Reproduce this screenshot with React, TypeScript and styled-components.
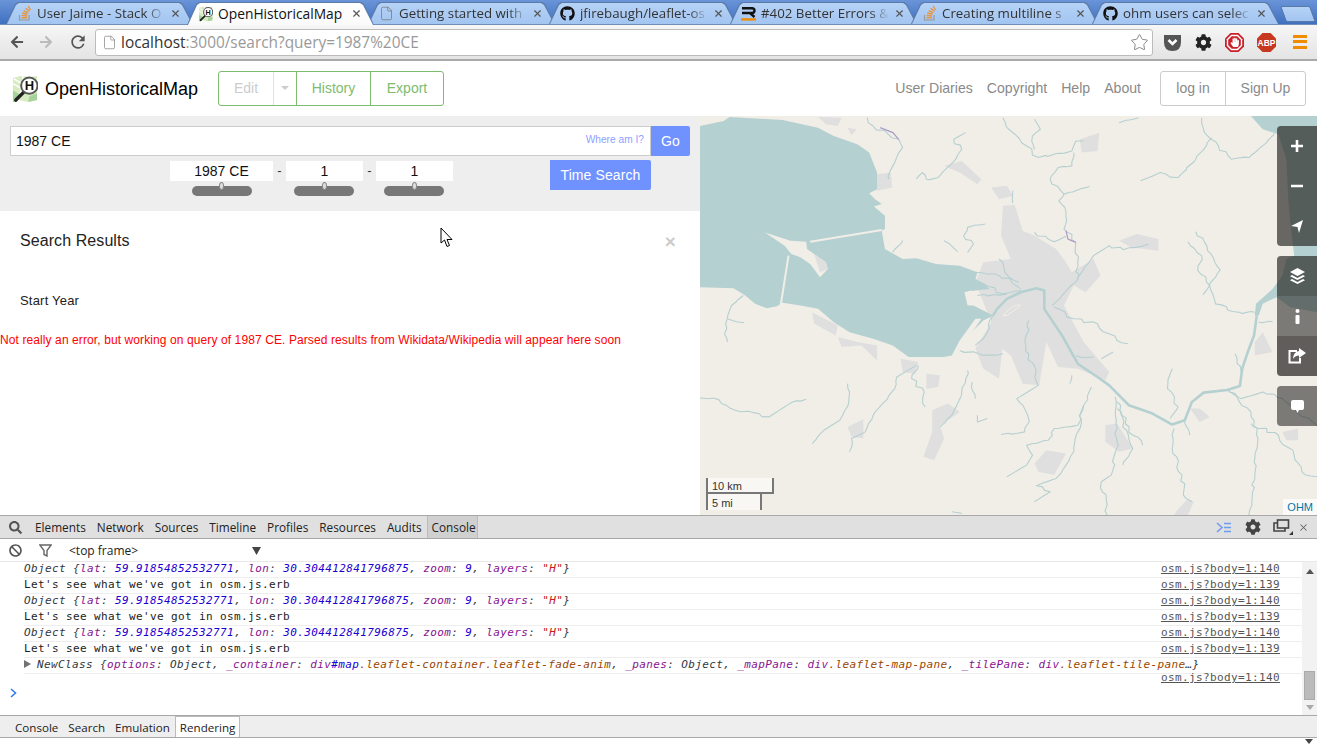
import styled, { createGlobalStyle } from 'styled-components';
import { FaGithub, FaCog, FaArrowLeft, FaArrowRight, FaHandPaper, FaBan, FaSearch } from 'react-icons/fa';
import { MdRefresh } from 'react-icons/md';
import { File, Star, X } from 'lucide-react';

const GlobalStyle = createGlobalStyle`
  html, body { margin: 0; padding: 0; background: #fff; }
  * { box-sizing: border-box; }
`;

const Page = styled.div`
  width: 1317px;
  height: 744px;
  display: flex;
  flex-direction: column;
  position: relative;
  overflow: hidden;
  font-family: "Liberation Sans", Arial, sans-serif;
`;

/* browser chrome */
const TabStrip = styled.div`
  height: 25px;
  display: flex;
  padding-left: 6px;
  background: linear-gradient(#6a94d8, #3f70c0);
  border-bottom: 1px solid #6f8fb8;
`;

const tabShape = 'polygon(0 100%, 9px 2px, 12px 0, calc(100% - 13px) 0, calc(100% - 10px) 2px, 100% 100%)';

const TabEdge = styled.div<{ $active?: boolean }>`
  width: 187px;
  height: ${p => (p.$active ? 23 : 22)}px;
  margin: 2px -6px 0 0;
  padding: 1px 1px 0;
  flex: none;
  position: relative;
  z-index: ${p => (p.$active ? 2 : 1)};
  background: #5a7ba8;
  clip-path: ${tabShape};
`;

const TabFace = styled.div<{ $active?: boolean }>`
  height: 100%;
  display: flex;
  align-items: center;
  padding: 0 11px 1px 10px;
  gap: 5px;
  background: ${p => (p.$active ? 'linear-gradient(#fff, #fafafa)' : 'linear-gradient(#b6d2f6, #a2c5f1)')};
  clip-path: ${tabShape};
`;

const TabIcon = styled.span`
  width: 15px;
  height: 16px;
  flex: none;
  display: flex;
  align-items: center;
  justify-content: center;
`;

const TabTitle = styled.span<{ $active?: boolean }>`
  flex: 1;
  overflow: hidden;
  white-space: nowrap;
  font: ${p => (p.$active ? 13.8 : 13.3)}px "Open Sans", sans-serif;
  color: ${p => (p.$active ? '#111' : '#333')};
  ${p => (p.$active ? '' : 'mask-image: linear-gradient(90deg, #000 85%, transparent);')}
`;

const TabClose = styled.span`
  flex: none;
  display: flex;
  color: #555;
`;

const NewTab = styled.div`
  width: 30px;
  height: 16px;
  margin: 6px 0 0 10px;
  background: linear-gradient(#b6d2f6, #a2c5f1);
  border: 1px solid #5a7ba8;
  border-radius: 2px;
  transform: skewX(20deg);
`;

const Toolbar = styled.div`
  height: 36px;
  display: flex;
  align-items: center;
  padding: 0 8px 0 10px;
  background: linear-gradient(#f6f6f6, #e4e4e4);
  border-bottom: 2px solid #aaa;
`;

const NavIcons = styled.div`
  width: 85px;
  display: flex;
  align-items: center;
  gap: 15px;
  flex: none;
`;

const AddressBar = styled.div`
  width: 1058px;
  height: 27px;
  flex: none;
  display: flex;
  align-items: center;
  gap: 4px;
  padding: 0 3px 0 6px;
  background: #fff;
  border: 1px solid #bbb;
  border-radius: 3px;
  font: 15.4px "Open Sans", sans-serif;
  color: #999;
`;

const Host = styled.span`
  color: #333;
`;

const Url = styled.span`
  flex: 1;
  white-space: nowrap;
`;

const ExtIcons = styled.div`
  display: flex;
  align-items: center;
  gap: 13px;
  margin-left: 10px;
`;

const Burger = styled.span`
  width: 14px;
  height: 14px;
  margin-left: 4px;
  background: linear-gradient(#f08c00 0 3px, transparent 3px 5.5px, #f08c00 5.5px 8.5px, transparent 8.5px 11px, #f08c00 11px 14px);
`;

/* site header */
const Header = styled.header`
  height: 55px;
  flex: none;
  display: flex;
  align-items: center;
  padding: 0 11px;
  font-size: 14px;
`;

const Brand = styled.div`
  display: flex;
  align-items: center;
  gap: 7px;
  font-size: 18px;
  line-height: 24px;
  color: #000;
  width: 207px;
`;

const BrandName = styled.span`
  padding-top: 1px;
`;

const BtnGroup = styled.div<{ $tone: string }>`
  height: 35px;
  display: flex;
  border: 1px solid ${p => p.$tone};
  border-radius: 3px;
`;

const GroupBtn = styled.div<{ $w: number; $tone: string; $color: string; $thin?: boolean }>`
  width: ${p => p.$w}px;
  padding-bottom: 1px;
  display: flex;
  align-items: center;
  justify-content: center;
  color: ${p => p.$color};
  border-right: 1px solid ${p => (p.$thin ? '#d8e8d4' : p.$tone)};
  &:last-child { border-right: 0; }
`;

const Caret = styled.span`
  width: 0;
  height: 0;
  border: 4px solid transparent;
  border-top: 4px solid #ccc;
  border-bottom: 0;
`;

const Links = styled.nav`
  margin-left: auto;
  display: flex;
  gap: 14px;
  padding-bottom: 1px;
  font-size: 14.1px;
  color: #8a8a8a;
  margin-right: 19px;
`;

/* body */
const Main = styled.main`
  height: 399px;
  flex: none;
  display: flex;
`;

const Left = styled.section`
  width: 700px;
  flex: none;
`;

const SearchPanel = styled.div`
  height: 95px;
  background: #eee;
  padding: 10px 10px 0;
`;

const SearchRow = styled.div`
  width: 680px;
  height: 30px;
  display: flex;
`;

const QueryBox = styled.div`
  width: 641px;
  display: flex;
  align-items: center;
  justify-content: space-between;
  padding: 0 6px 0 5px;
  background: #fff;
  border: 1px solid #ccc;
  font-size: 14px;
  color: #111;
`;

const WhereAmI = styled.span`
  font-size: 10.2px;
  color: #8f9fff;
  margin-top: -3px;
`;

const BlueBtn = styled.div<{ $w: number; $h: number }>`
  width: ${p => p.$w}px;
  height: ${p => p.$h}px;
  display: flex;
  align-items: center;
  justify-content: center;
  background: #7092ff;
  color: #fff;
  font-size: 14px;
  letter-spacing: 0.1px;
  border-radius: 0 2px 2px 0;
`;

const DateRow = styled.div`
  display: flex;
  padding: 4px 0 0 160px;
`;

const DateCol = styled.div<{ $w: number }>`
  width: ${p => p.$w}px;
  display: flex;
  flex-direction: column;
  align-items: center;
  margin-top: 1px;
`;

const DateValue = styled.div`
  width: 100%;
  height: 20px;
  display: flex;
  align-items: center;
  justify-content: center;
  background: #fff;
  font-size: 14px;
  color: #111;
`;

const Slider = styled.div<{ $nudge?: boolean }>`
  width: 60px;
  height: 10px;
  margin: 5px ${p => (p.$nudge ? 1 : 0)}px 0 0;
  position: relative;
  background: #777;
  border-radius: 5px;
`;

const Thumb = styled.span`
  position: absolute;
  left: 50%;
  top: -4px;
  width: 5px;
  height: 8px;
  margin-left: -2.5px;
  background: #ddd;
  border: 1px solid #888;
  border-radius: 50%;
`;

const Dash = styled.span`
  width: 13px;
  height: 20px;
  display: flex;
  align-items: center;
  justify-content: center;
  font-size: 13px;
  color: #333;
`;

const TimeBtnWrap = styled.div`
  margin-left: 97px;
`;

const ResultsHead = styled.div`
  height: 18px;
  margin: 21px 24px 0 20px;
  display: flex;
  align-items: center;
  justify-content: space-between;
  font-size: 16px;
  letter-spacing: 0.08px;
  color: #222;
`;

const CloseMark = styled.span`
  color: #ccc;
  font-size: 19px;
  font-weight: bold;
  line-height: 1;
`;

const StartYear = styled.div`
  margin: 43px 0 0 20px;
  font-size: 13px;
  letter-spacing: 0.2px;
  line-height: 16px;
  color: #222;
`;

const Notice = styled.div`
  margin-top: 23px;
  font-size: 12px;
  letter-spacing: 0.1px;
  line-height: 16px;
  color: #f00;
  white-space: nowrap;
`;

const MapPane = styled.section`
  flex: 1;
  position: relative;
  overflow: hidden;
  background: #f1eee8;
`;

const MapArt = styled.svg`
  display: block;
  width: 100%;
  height: 100%;
`;

const ControlGroup = styled.div<{ $top: number }>`
  position: absolute;
  right: 0;
  top: ${p => p.$top}px;
  width: 40px;
  border-radius: 4px 0 0 4px;
  overflow: hidden;
`;

const ControlBtn = styled.div<{ $alpha: number }>`
  height: 40px;
  display: flex;
  align-items: center;
  justify-content: center;
  background: rgba(40, 38, 36, ${p => p.$alpha});
`;

const ScaleBox = styled.div`
  position: absolute;
  left: 6px;
  bottom: 5px;
  font-size: 11px;
  color: #333;
`;

const ScaleLine = styled.div<{ $w: number; $top?: boolean }>`
  width: ${p => p.$w}px;
  height: 16px;
  padding: 0 0 0 4px;
  line-height: ${p => (p.$top ? 16 : 18)}px;
  background: rgba(255, 255, 255, 0.5);
  border: 2px solid #777;
  border-width: ${p => (p.$top ? '0 2px 2px 2px' : '0 2px 0 2px')};
`;

const Attribution = styled.div`
  position: absolute;
  right: 0;
  bottom: 0;
  height: 16px;
  padding: 0 4px;
  line-height: 17px;
  font-size: 11px;
  color: #0078a8;
  background: rgba(255, 255, 255, 0.7);
`;

/* devtools */
const Devtools = styled.section`
  flex: 1;
  display: flex;
  flex-direction: column;
  border-top: 1px solid #a8a8a8;
  background: #fff;
  font: 11.8px "Open Sans", sans-serif;
  color: #222;
`;

const DevTabs = styled.div`
  height: 23px;
  flex: none;
  display: flex;
  align-items: center;
  padding-left: 9px;
  background: #e0e0e0;
  border-bottom: 1px solid #a8a8a8;
`;

const DevTab = styled.span<{ $left: number; $active?: boolean }>`
  margin-left: ${p => p.$left}px;
  ${p => p.$active && 'height: 22px; line-height: 22px; padding: 0 1px 0 4px; background: #d0d0d0; border-left: 1px solid #bbb; border-right: 1px solid #bbb;'}
`;

const DevRight = styled.div`
  margin-left: auto;
  display: flex;
  align-items: center;
  gap: 12px;
  padding-right: 8px;
  & > svg:first-child { margin-right: 2px; }
  & > svg:last-child { margin-left: -7px; }
`;

const ConsoleBar = styled.div`
  height: 23px;
  flex: none;
  display: flex;
  align-items: center;
  padding-left: 9px;
  border-bottom: 1px solid #e8e8e8;
`;

const FrameSelect = styled.span`
  width: 192px;
  margin-left: 17px;
  padding-top: 1px;
  display: flex;
  justify-content: space-between;
  align-items: center;
  font-size: 12px;
`;

const FilterIcon = styled.svg`
  margin-left: 17px;
`;

const ConsoleBody = styled.div`
  flex: 1;
  display: flex;
  min-height: 0;
`;

const Log = styled.div`
  flex: 1;
  padding-left: 24px;
  font: 11px "DejaVu Sans Mono", monospace;
  letter-spacing: 0.38px;
  color: #222;
`;

const Row = styled.div`
  height: 16px;
  line-height: 13px;
  display: flex;
  justify-content: space-between;
  align-items: flex-start;
  border-bottom: 1px solid #eee;
  white-space: nowrap;
  padding-right: 22px;
`;

const ObjText = styled.span`
  font-style: italic;
  color: #303942;
`;

const SourceLink = styled.span`
  color: #545454;
  text-decoration: underline;
  font-style: normal;
`;

const LinkOnly = styled.div`
  height: 11px;
  margin-top: -2px;
  line-height: 11px;
  text-align: right;
  padding-right: 22px;
`;

const Key = styled.span`
  color: #881391;
`;

const Num = styled.span`
  color: #1c00cf;
`;

const Str = styled.span`
  color: #c41a16;
`;

const Cls = styled.span`
  color: #994500;
`;

const Expand = styled.span`
  display: inline-block;
  width: 0;
  height: 0;
  margin: 0 6px 0 0;
  border-left: 7px solid #727272;
  border-top: 4px solid transparent;
  border-bottom: 4px solid transparent;
`;

const Prompt = styled.svg`
  display: block;
  margin: 5px 0 0 -14px;
`;

const Scrollbar = styled.div`
  width: 15px;
  flex: none;
  display: flex;
  flex-direction: column;
  align-items: center;
  background: #f2f2f2;
`;

const ScrollUp = styled.span`
  margin-top: 7px;
  width: 0;
  height: 0;
  border: 4px solid transparent;
  border-top: 0;
  border-bottom: 5px solid #555;
`;

const ScrollThumb = styled.span`
  width: 11px;
  height: 29px;
  margin-top: 97px;
  background: #bbb;
  border: 1px solid #aaa;
`;

const ScrollDown = styled.span`
  margin-top: 5px;
  width: 0;
  height: 0;
  border: 4px solid transparent;
  border-bottom: 0;
  border-top: 5px solid #aaa;
`;

const Drawer = styled.div`
  height: 23px;
  flex: none;
  display: flex;
  align-items: stretch;
  padding-left: 15px;
  gap: 10px;
  font-size: 11.6px;
  background: #eee;
  border-top: 1px solid #a8a8a8;
  border-bottom: 1px solid #a8a8a8;
`;

const DrawerTab = styled.span<{ $active?: boolean }>`
  display: flex;
  align-items: center;
  padding-top: 1px;
  ${p => p.$active && 'background: #fff; border: 1px solid #bbb; border-bottom: 0; padding: 1px 4px 0; margin-left: -5px;'}
`;

const Footer = styled.div`
  height: 6px;
  flex: none;
  position: relative;
`;

const FooterArrow = styled.span`
  position: absolute;
  right: 4px;
  top: 1px;
  width: 0;
  height: 0;
  border: 4px solid transparent;
  border-bottom: 0;
  border-top: 5px solid #444;
`;

const Cursor = styled.svg`
  position: absolute;
  left: 440px;
  top: 227px;
`;

const water = '#b5d0d0';
const urban = '#e0dfdf';

const tabs = [
  { title: 'User Jaime - Stack O', icon: 'so' },
  { title: 'OpenHistoricalMap', icon: 'ohm', active: true },
  { title: 'Getting started with', icon: 'file' },
  { title: 'jfirebaugh/leaflet-os', icon: 'gh' },
  { title: '#402 Better Errors &', icon: 'r' },
  { title: 'Creating multiline s', icon: 'so2' },
  { title: 'ohm users can selec', icon: 'gh' },
];

const urbanPatches = [
  'M770,270 L800,268 L820,345 L850,360 L905,400 L930,440 L945,470 L1000,430 L1018,480 L980,530 L950,510 L925,570 L975,680 L1040,770 L1030,795 L1000,780 L960,760 L910,755 L880,680 L862,810 L820,805 L790,720 L768,700 L760,790 L720,760 L700,700 L740,620 L700,500 L720,440 L790,430 L765,360 Z',
  'M965,70 L1015,50 L1010,105 L970,110 Z',
  'M740,215 L780,210 L795,240 L760,250 Z',
  'M620,150 L665,135 L715,190 L705,205 L660,170 Z',
  'M450,175 L485,170 L488,215 L450,225 Z',
  'M300,3 L360,5 L350,30 L320,25 Z',
  'M375,35 L398,40 L385,58 Z',
  'M1065,375 L1110,355 L1165,370 L1165,405 L1095,395 Z',
  'M285,590 L350,630 L345,660 L290,625 Z',
  'M350,665 L400,680 L450,690 L450,735 L410,690 L360,695 Z',
  'M510,730 L555,740 L545,775 L515,770 Z',
  'M575,775 L610,780 L605,815 L575,820 Z',
  'M590,885 L630,865 L660,890 L610,930 L620,970 L595,1035 L568,1025 L590,950 Z',
  'M375,935 L415,912 L415,970 L385,965 Z',
  'M850,1045 L880,1005 L930,1015 L900,1080 L860,1070 Z',
  'M1030,930 L1060,925 L1100,1000 L1065,1010 L1030,980 Z',
  'M1245,880 L1270,880 L1295,905 L1270,920 Z',
  'M1410,680 L1430,650 L1455,710 L1410,720 Z',
  'M1480,950 L1520,940 L1520,975 L1490,975 Z',
  'M1210,1190 L1240,1150 L1255,1160 L1240,1200 L1205,1200 Z',
];

const rivers = [
  'M425,5 L440,30 L505,70 L515,95 L490,150 L480,190',
  'M550,190 L565,170 L575,190 L605,185 L650,130 L665,100 L645,70 L675,50',
  'M770,5 L790,45 L830,90 L860,125 L945,105 L955,75 L975,75',
  'M850,10 L865,40 L845,60 L850,100',
  'M950,110 L945,150 L910,155 L890,190 L925,235 L990,212',
  'M925,235 L912,255 L930,290 L925,340 L955,380 L960,440 L960,490 L920,540 L895,570',
  'M1065,20 L1115,5',
  'M1275,5 L1290,60 L1350,130 L1395,125 L1440,80 L1460,50',
  'M1300,65 L1260,130 L1215,185 L1170,170 L1120,195',
  'M795,225 L795,262',
  'M725,325 L680,335 L670,360 L695,385 L680,410',
  'M620,375 L655,408',
  'M515,375 L490,410',
  'M850,350 L900,378 L930,362',
  'M960,490 L1000,420 L1040,390 L1075,402 L1140,385',
  'M1260,348 L1290,405 L1322,462 L1295,510 L1265,465 L1275,420 L1240,378',
  'M1295,510 L1310,565 L1370,590 L1410,590',
  'M1295,510 L1278,538',
  'M900,575 L950,610 L1010,625 L1060,675 L1088,685',
  'M1020,730 L1050,710',
  'M955,720 L1000,725',
  'M1420,620 L1455,618',
  'M0,848 L35,848 L90,885 L175,905 L235,860 L270,852',
  'M375,805 L378,860 L355,915 L315,945 L285,985',
  'M550,750 L500,785 L495,820 L440,900 L420,950 L385,970 L380,1010',
  'M555,750 L538,790 L570,830 L572,875',
  'M680,765 L665,830 L640,900 L610,935',
  'M692,800 L700,850',
  'M835,615 L828,690 L860,810 L805,850 L835,910 L825,950 L765,958',
  'M995,815 L975,870 L960,930 L900,940 L885,975 L830,990 L845,1020 L830,1050 L780,1085',
  'M975,870 L950,1000 L930,1050 L905,1090 L855,1112 L890,1130 L850,1160',
  'M1055,845 L1060,980 L1045,1080 L1020,1100 L1035,1200',
  'M1060,860 L1100,960 L1125,990',
  'M1060,880 L1100,1000 L1075,1050',
  'M1205,940 L1200,1000 L1225,1080 L1235,1150 L1250,1160',
  'M1200,760 L1188,820 L1215,875 L1195,910',
  'M1230,915 L1245,960',
  'M1360,715 L1375,770',
  'M1340,825 L1400,890 L1418,970 L1410,1080 L1395,1200',
  'M1345,830 L1375,850 L1430,830 L1480,850 L1510,880 L1568,930',
  'M1400,925 L1470,960 L1510,1020 L1530,1070 L1568,1085',
  'M110,540 L80,570 L65,625 L70,680',
  'M70,610 L112,622',
  'M720,505 L770,535 L815,525',
  'M700,470 L760,480 L810,500',
  'M705,540 L780,535',
  'M760,430 L775,470 L815,520',
  'M745,600 L720,670 L700,690',
  'M660,705 L720,720 L770,715',
  'M705,900 L705,920 L730,910',
  'M640,1190 L665,1195',
  'M940,805 L945,780',
];

// break each straight run into small jogs so the streams read as natural water
function wiggle(d: string, seed: number) {
  const pts = d.match(/-?\d+,-?\d+/g)!.map(s => s.split(',').map(Number));
  let out = `M${pts[0][0]},${pts[0][1]}`;
  let r = seed * 7 + 3;
  for (let i = 1; i < pts.length; i++) {
    const [x0, y0] = pts[i - 1];
    const [x1, y1] = pts[i];
    const steps = Math.max(1, Math.round(Math.hypot(x1 - x0, y1 - y0) / 14));
    for (let s = 1; s <= steps; s++) {
      r = (r * 31 + 17) % 101;
      const off = s === steps ? 0 : (r / 101 - 0.5) * 11;
      const t = s / steps;
      out += ` L${(x0 + (x1 - x0) * t + off).toFixed(1)},${(y0 + (y1 - y0) * t - off * 0.7).toFixed(1)}`;
    }
  }
  return out;
}

function MapDrawing() {
  return (
    <MapArt viewBox="0 0 1568 1200" preserveAspectRatio="none">
      {urbanPatches.map((d, i) => <path key={i} d={d} fill={urban} />)}
      <path fill={water} d="M0,30 L60,15 L75,3 L210,12 L300,35 L340,60 L400,85 L430,110 L450,170 L450,220 L430,232 L445,250 L462,265 L442,272 L470,300 L470,340 L462,345 L470,400 L515,430 L550,428 L600,445 L660,450 L705,470 L700,490 L725,505 L735,520 L700,525 L672,530 L695,570 L745,600 L720,615 L690,650 L660,675 L640,720 L620,725 L530,725 L490,690 L440,670 L380,650 L340,620 L300,580 L255,570 L210,562 L195,572 L170,578 L140,565 L115,540 L85,518 L0,515 Z" />
      <path fill={water} d="M1400,0 L1568,0 L1568,590 L1500,575 L1465,545 L1430,565 L1420,600 L1410,600 L1413,565 L1455,520 L1480,480 L1490,430 L1510,420 L1500,320 L1495,250 L1490,130 L1470,55 L1430,40 Z" />
      <path fill="none" stroke={water} strokeWidth="2.6" strokeLinejoin="round" vectorEffect="non-scaling-stroke" d="M1415,600 L1408,660 L1392,710 L1378,760 L1372,812 L1340,824 L1280,832 L1250,860 L1232,915 L1200,928 L1150,895 L1090,870 L1040,810 L1010,785 L960,745 L920,660 L875,580 L875,525 L855,518 L815,530 L780,550 L755,580 L745,600" />
      <path fill="#f1eee8" d="M165,350 L230,375 L270,378 L272,400 L320,440 L325,460 L305,485 L280,445 L255,425 L232,415 L215,390 Z" />
      <path fill={urban} d="M290,415 L320,440 L325,460 L305,470 Z" />
      <path stroke="#f1eee8" strokeWidth="2" fill="none" d="M205,570 L225,420 M280,378 L462,343" vectorEffect="non-scaling-stroke" />
      <path fill="#f1eee8" d="M672,530 L690,525 L700,570 L680,570 Z M660,675 L700,610 L715,610 L680,670 Z" />
      {rivers.map((d, i) => (
        <path key={i} fill="none" stroke={water} strokeWidth="1.1" d={wiggle(d, i)} vectorEffect="non-scaling-stroke" strokeLinejoin="round" />
      ))}
      <path fill="none" stroke="#f1eee8" strokeWidth="1" d="M770,600 C790,570 810,565 815,570 L780,600 Z" vectorEffect="non-scaling-stroke" />
      <path fill="none" stroke="#ab9bc6" strokeWidth="1.2" d="M458,35 L490,50 L505,70 M930,345 L935,370 L955,380" vectorEffect="non-scaling-stroke" />
    </MapArt>
  );
}

function StackIcon() {
  return (
    <svg width="14" height="16" viewBox="0 0 14 16">
      <path d="M1.5,10 V15 H11 V10" stroke="#999" strokeWidth="1.2" fill="none" />
      <path d="M3.5,12.8 H9 M3.6,10.4 L9,11 M4.3,8 L9.4,9.3 M5.6,5.6 L10.2,7.8 M7.6,3.2 L11.5,6.4 M10.2,1 L12.6,5" stroke="#e8963f" strokeWidth="1.4" fill="none" />
    </svg>
  );
}

function Favicon({ kind }: { kind: string }) {
  if (kind === 'so' || kind === 'so2') return <StackIcon />;
  if (kind === 'gh') return <FaGithub size={15} color="#111" />;
  if (kind === 'file') return <File size={15} color="#777" strokeWidth={1.2} />;
  if (kind === 'ohm') return <LogoMark size={15} />;
  return (
    <svg width="15" height="15" viewBox="0 0 15 15">
      <path d="M1,2.2 H11 Q13.5,2.2 13.5,4.6 Q13.5,7 11,7 H1 M9,7 L13.5,11" stroke="#111" strokeWidth="2.4" fill="none" />
      <rect x="0" y="12.2" width="15" height="2.4" fill="#f08c00" />
    </svg>
  );
}

function LogoMark({ size }: { size: number }) {
  return (
    <svg width={size} height={size + 1} viewBox="0 0 28 29">
      <path d="M2,3 L10,1 L20,2 L27,1 V26 L18,28 L8,26 L2,28 Z" fill="#d6ecc0" />
      <path d="M2,9 L11,14 L7,27 M12,1 L13,10 L3,4" stroke="#fff" strokeWidth="1.6" fill="none" />
      <path d="M2,16 L9,20 L6,28 L2,28 Z M19,22 L27,19 V26 L18,28 Z" fill="#a5d29a" />
      <path d="M13,18 L5,26" stroke="#222" strokeWidth="3.6" strokeLinecap="round" />
      <circle cx="19" cy="11" r="8.5" fill="#fff" stroke="#555" strokeWidth="2" />
      <text x="19" y="15.8" textAnchor="middle" fontFamily="Liberation Sans" fontWeight="bold" fontSize="13.5" fill="#111">H</text>
    </svg>
  );
}

function ObjectRow() {
  return (
    <Row>
      <ObjText>
        Object {'{'}<Key>lat</Key>: <Num>59.91854852532771</Num>, <Key>lon</Key>: <Num>30.304412841796875</Num>, <Key>zoom</Key>: <Num>9</Num>, <Key>layers</Key>: <Str>"H"</Str>{'}'}
      </ObjText>
      <SourceLink>osm.js?body=1:140</SourceLink>
    </Row>
  );
}

function TextRow() {
  return (
    <Row>
      <span>Let's see what we've got in osm.js.erb</span>
      <SourceLink>osm.js?body=1:139</SourceLink>
    </Row>
  );
}

export default function App() {
  return (
    <Page>
      <GlobalStyle />
      <TabStrip>
        {tabs.map(t => (
          <TabEdge key={t.title} $active={t.active}>
            <TabFace $active={t.active}>
              <TabIcon><Favicon kind={t.icon} /></TabIcon>
              <TabTitle $active={t.active}>{t.title}</TabTitle>
              <TabClose><X size={11} strokeWidth={2.5} /></TabClose>
            </TabFace>
          </TabEdge>
        ))}
        <NewTab />
      </TabStrip>
      <Toolbar>
        <NavIcons>
          <FaArrowLeft size={14} color="#555" />
          <FaArrowRight size={14} color="#bbb" />
          <MdRefresh size={20} color="#555" />
        </NavIcons>
        <AddressBar>
          <File size={15} color="#888" strokeWidth={1.2} />
          <Url><Host>localhost</Host>:3000/search?query=1987%20CE</Url>
          <Star size={19} color="#777" strokeWidth={1.1} />
        </AddressBar>
        <ExtIcons>
          <svg width="19" height="19" viewBox="0 0 19 19">
            <path d="M1,2 H18 V9 Q18,18 9.5,18 Q1,18 1,9 Z" fill="#555" />
            <path d="M5.5,7 L9.5,11 L13.5,7" stroke="#fff" strokeWidth="2.6" fill="none" />
          </svg>
          <FaCog size={17} color="#222" />
          <svg width="19" height="19" viewBox="0 0 19 19">
            <polygon points="5.5,0 13.5,0 19,5.5 19,13.5 13.5,19 5.5,19 0,13.5 0,5.5" fill="#c9202a" />
            <polygon points="6.2,1.8 12.8,1.8 17.2,6.2 17.2,12.8 12.8,17.2 6.2,17.2 1.8,12.8 1.8,6.2" fill="#fff" />
            <polygon points="6.8,3.2 12.2,3.2 15.8,6.8 15.8,12.2 12.2,15.8 6.8,15.8 3.2,12.2 3.2,6.8" fill="#c9202a" />
            <FaHandPaper x="5" y="4.5" size={9.5} color="#fff" />
          </svg>
          <svg width="19" height="19" viewBox="0 0 19 19">
            <polygon points="5.5,0 13.5,0 19,5.5 19,13.5 13.5,19 5.5,19 0,13.5 0,5.5" fill="#c8371f" />
            <text x="9.5" y="12.5" textAnchor="middle" fontFamily="Liberation Sans" fontWeight="bold" fontSize="8.5" fill="#fff">ABP</text>
          </svg>
          <Burger />
        </ExtIcons>
      </Toolbar>
      <Header>
        <Brand>
          <LogoMark size={27} />
          <BrandName>OpenHistoricalMap</BrandName>
        </Brand>
        <BtnGroup $tone="#7ebc6f">
          <GroupBtn $w={55} $tone="#7ebc6f" $color="#ccc" $thin>Edit</GroupBtn>
          <GroupBtn $w={23} $tone="#7ebc6f" $color="#ccc"><Caret /></GroupBtn>
          <GroupBtn $w={74} $tone="#7ebc6f" $color="#7ebc6f">History</GroupBtn>
          <GroupBtn $w={72} $tone="#7ebc6f" $color="#7ebc6f">Export</GroupBtn>
        </BtnGroup>
        <Links>
          <span>User Diaries</span>
          <span>Copyright</span>
          <span>Help</span>
          <span>About</span>
        </Links>
        <BtnGroup $tone="#ccc">
          <GroupBtn $w={65} $tone="#ccc" $color="#8a8a8a">log in</GroupBtn>
          <GroupBtn $w={79} $tone="#ccc" $color="#8a8a8a">Sign Up</GroupBtn>
        </BtnGroup>
      </Header>
      <Main>
        <Left>
          <SearchPanel>
            <SearchRow>
              <QueryBox>
                1987 CE
                <WhereAmI>Where am I?</WhereAmI>
              </QueryBox>
              <BlueBtn $w={39} $h={30}>Go</BlueBtn>
            </SearchRow>
            <DateRow>
              <DateCol $w={103}>
                <DateValue>1987 CE</DateValue>
                <Slider><Thumb /></Slider>
              </DateCol>
              <Dash>-</Dash>
              <DateCol $w={77}>
                <DateValue>1</DateValue>
                <Slider $nudge><Thumb /></Slider>
              </DateCol>
              <Dash>-</Dash>
              <DateCol $w={77}>
                <DateValue>1</DateValue>
                <Slider $nudge><Thumb /></Slider>
              </DateCol>
              <TimeBtnWrap>
                <BlueBtn $w={101} $h={30}>Time Search</BlueBtn>
              </TimeBtnWrap>
            </DateRow>
          </SearchPanel>
          <ResultsHead>
            Search Results
            <CloseMark>×</CloseMark>
          </ResultsHead>
          <StartYear>Start Year</StartYear>
          <Notice>Not really an error, but working on query of 1987 CE. Parsed results from Wikidata/Wikipedia will appear here soon</Notice>
        </Left>
        <MapPane>
          <MapDrawing />
          <ControlGroup $top={10}>
            <ControlBtn $alpha={0.68}>
              <svg width="14" height="14" viewBox="0 0 14 14"><path d="M7,1 V13 M1,7 H13" stroke="#fff" strokeWidth="2.6" /></svg>
            </ControlBtn>
            <ControlBtn $alpha={0.68}>
              <svg width="14" height="14" viewBox="0 0 14 14"><path d="M1,7 H13" stroke="#fff" strokeWidth="2.4" /></svg>
            </ControlBtn>
            <ControlBtn $alpha={0.68}>
              <svg width="14" height="14" viewBox="0 0 14 14"><path d="M1,7 L13,1 L9,14 L7.5,8 Z" fill="#fff" /></svg>
            </ControlBtn>
          </ControlGroup>
          <ControlGroup $top={140}>
            <ControlBtn $alpha={0.68}>
              <svg width="15" height="16" viewBox="0 0 15 16" fill="#fff">
                <path d="M7.5,0 L15,4 L7.5,8 L0,4 Z" />
                <path d="M2,7 L7.5,10 L13,7 L15,8.2 L7.5,12 L0,8.2 Z" />
                <path d="M2,11 L7.5,14 L13,11 L15,12.2 L7.5,16 L0,12.2 Z" />
              </svg>
            </ControlBtn>
            <ControlBtn $alpha={0.58}>
              <svg width="5" height="15" viewBox="0 0 5 15" fill="#fff">
                <circle cx="2.5" cy="2" r="2" />
                <rect x="0.5" y="6" width="4" height="9" rx="1" />
              </svg>
            </ControlBtn>
            <ControlBtn $alpha={0.72}>
              <svg width="18" height="16" viewBox="0 0 18 16">
                <path d="M9,3 H1.5 V14.5 H12 V10" stroke="#fff" strokeWidth="2" fill="none" />
                <path d="M11,0 L18,5 L11,10 V7.5 Q7,7.5 5,11 Q5.5,3.5 11,3 Z" fill="#fff" />
              </svg>
            </ControlBtn>
          </ControlGroup>
          <ControlGroup $top={270}>
            <ControlBtn $alpha={0.58}>
              <svg width="13" height="13" viewBox="0 0 13 13"><path d="M2,0 H11 Q13,0 13,2 V8 Q13,10 11,10 H8 L6.5,13 L5,10 H2 Q0,10 0,8 V2 Q0,0 2,0 Z" fill="#fff" /></svg>
            </ControlBtn>
          </ControlGroup>
          <ScaleBox>
            <ScaleLine $w={68} $top>10 km</ScaleLine>
            <ScaleLine $w={56}>5 mi</ScaleLine>
          </ScaleBox>
          <Attribution>OHM</Attribution>
        </MapPane>
      </Main>
      <Devtools>
        <DevTabs>
          <FaSearch size={13} color="#555" />
          <DevTab $left={13}>Elements</DevTab>
          <DevTab $left={11}>Network</DevTab>
          <DevTab $left={11}>Sources</DevTab>
          <DevTab $left={11}>Timeline</DevTab>
          <DevTab $left={11}>Profiles</DevTab>
          <DevTab $left={11}>Resources</DevTab>
          <DevTab $left={11}>Audits</DevTab>
          <DevTab $left={5} $active>Console</DevTab>
          <DevRight>
            <svg width="15" height="11" viewBox="0 0 15 11" fill="none" stroke="#6d9bef" strokeWidth="1.6">
              <path d="M1,1 L6,5.5 L1,10 M8,1.5 H15 M8,5.5 H15 M8,9.5 H15" />
            </svg>
            <FaCog size={16} color="#444" />
            <svg width="20" height="16" viewBox="0 0 20 16" fill="none" stroke="#444" strokeWidth="1.6">
              <rect x="4.5" y="1" width="11" height="8" />
              <path d="M4.5,4 H1 V12 H12 V9" />
              <path d="M20,12 V16 H16 Z" fill="#333" stroke="none" />
            </svg>
            <X size={11} color="#666" strokeWidth={2.2} />
          </DevRight>
        </DevTabs>
        <ConsoleBar>
          <FaBan size={13} color="#555" />
          <FilterIcon width="13" height="13" viewBox="0 0 13 13" fill="none" stroke="#666" strokeWidth="1.4">
            <path d="M0.8,1 H12.2 L8,6.5 V12 L5,10.5 V6.5 Z" />
          </FilterIcon>
          <FrameSelect>
            &lt;top frame&gt;
            <svg width="9" height="8" viewBox="0 0 9 8"><path d="M0,0 H9 L4.5,8 Z" fill="#444" /></svg>
          </FrameSelect>
        </ConsoleBar>
        <ConsoleBody>
          <Log>
            <ObjectRow />
            <TextRow />
            <ObjectRow />
            <TextRow />
            <ObjectRow />
            <TextRow />
            <Row>
              <span>
                <Expand />
                <ObjText>
                  NewClass {'{'}<Key>options</Key>: Object, <Key>_container</Key>: <Key>div</Key><Num>#map</Num><Cls>.leaflet-container.leaflet-fade-anim</Cls>, <Key>_panes</Key>: Object, <Key>_mapPane</Key>: <Key>div</Key><Cls>.leaflet-map-pane</Cls>, <Key>_tilePane</Key>: <Key>div</Key><Cls>.leaflet-tile-pane</Cls>…{'}'}
                </ObjText>
              </span>
            </Row>
            <LinkOnly><SourceLink>osm.js?body=1:140</SourceLink></LinkOnly>
            <Prompt width="7" height="10" viewBox="0 0 7 10" fill="none" stroke="#367cf1" strokeWidth="1.6">
              <path d="M1,1 L5.5,5 L1,9" />
            </Prompt>
          </Log>
          <Scrollbar>
            <ScrollUp />
            <ScrollThumb />
            <ScrollDown />
          </Scrollbar>
        </ConsoleBody>
        <Drawer>
          <DrawerTab>Console</DrawerTab>
          <DrawerTab>Search</DrawerTab>
          <DrawerTab>Emulation</DrawerTab>
          <DrawerTab $active>Rendering</DrawerTab>
        </Drawer>
        <Footer><FooterArrow /></Footer>
      </Devtools>
      <Cursor width="13" height="21" viewBox="0 0 13 21">
        <path d="M1,1 L1,16 L4.5,13 L7,19.5 L9.5,18.5 L7,12.5 L12,12.5 Z" fill="#fff" stroke="#000" strokeWidth="1" />
      </Cursor>
    </Page>
  );
}
